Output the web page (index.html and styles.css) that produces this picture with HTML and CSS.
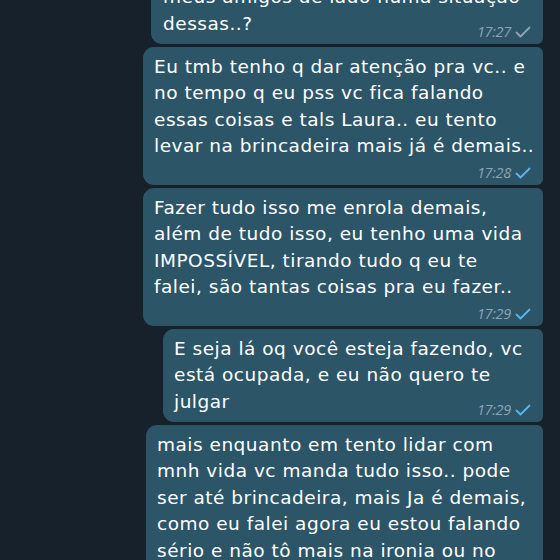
FILE: index.html
```html
<!DOCTYPE html>
<html lang="pt">
<head>
    <meta charset="UTF-8">
    <meta name="viewport" content="width=device-width, initial-scale=1.0">
    <title>Chat</title>
    <link rel="stylesheet" href="styles.css">
</head>
<body>
    <div class="chat">
        <div class="bubble b1 inline">
            <div class="text">meus amigos de lado numa situação<br>dessas..?</div>
            <div class="meta"><span class="time">17:27</span>
                <svg class="check sent" width="16" height="12" viewBox="0 0 16 12"><polyline points="1.5,6.5 5.5,10.5 14.5,1.5"/></svg>
            </div>
        </div>
        <div class="bubble b2">
            <div class="text">Eu tmb tenho q dar atenção pra vc.. e<br>no tempo q eu pss vc fica falando<br>essas coisas e tals Laura.. eu tento<br>levar na brincadeira mais já é demais..</div>
            <div class="meta"><span class="time">17:28</span>
                <svg class="check" width="16" height="12" viewBox="0 0 16 12"><polyline points="1.5,6.5 5.5,10.5 14.5,1.5"/></svg>
            </div>
        </div>
        <div class="bubble b3">
            <div class="text">Fazer tudo isso me enrola demais,<br>além de tudo isso, eu tenho uma vida<br>IMPOSSÍVEL, tirando tudo q eu te<br>falei, são tantas coisas pra eu fazer..</div>
            <div class="meta"><span class="time">17:29</span>
                <svg class="check" width="16" height="12" viewBox="0 0 16 12"><polyline points="1.5,6.5 5.5,10.5 14.5,1.5"/></svg>
            </div>
        </div>
        <div class="bubble b4 inline">
            <div class="text">E seja lá oq você esteja fazendo, vc<br>está ocupada, e eu não quero te<br>julgar</div>
            <div class="meta"><span class="time">17:29</span>
                <svg class="check" width="16" height="12" viewBox="0 0 16 12"><polyline points="1.5,6.5 5.5,10.5 14.5,1.5"/></svg>
            </div>
        </div>
        <div class="bubble b5">
            <div class="text">mais enquanto em tento lidar com<br>mnh vida vc manda tudo isso.. pode<br>ser até brincadeira, mais Ja é demais,<br>como eu falei agora eu estou falando<br>sério e não tô mais na ironia ou no<br>deboche</div>
        </div>
    </div>
</body>
</html>
```

FILE: styles.css
```css
*{margin:0;padding:0;box-sizing:border-box;}
body{background:#17212c;font-family:"DejaVu Sans","Open Sans",sans-serif;overflow:hidden;}
.chat{height:560px;overflow:hidden;display:flex;flex-direction:column;align-items:flex-end;gap:3px;padding-right:17px;}
.bubble{background:#2c5568;color:#fff;border-radius:11px 6px 6px 11px;padding:7px 12px 3px 11px;}
.text{font-size:18.5px;line-height:26.5px;letter-spacing:0.5px;white-space:nowrap;}
.meta{display:flex;justify-content:flex-end;align-items:center;gap:4px;height:18px;margin-top:4px;}
.inline .meta{margin-top:-14.5px;}
.time{font-family:"Open Sans",sans-serif;font-size:14.5px;font-style:italic;color:#8ea3b2;letter-spacing:-0.3px;}
.check{fill:none;stroke:#5cb6ec;stroke-width:1.8;stroke-linecap:round;stroke-linejoin:round;}
.check.sent{stroke:#8ea3b2;}
.b1{width:392px;margin-top:-23px;padding-left:12px;}
.b2{width:400px;}
.b3{width:400px;}
.b4{width:380px;}
.b5{width:397px;}
```
